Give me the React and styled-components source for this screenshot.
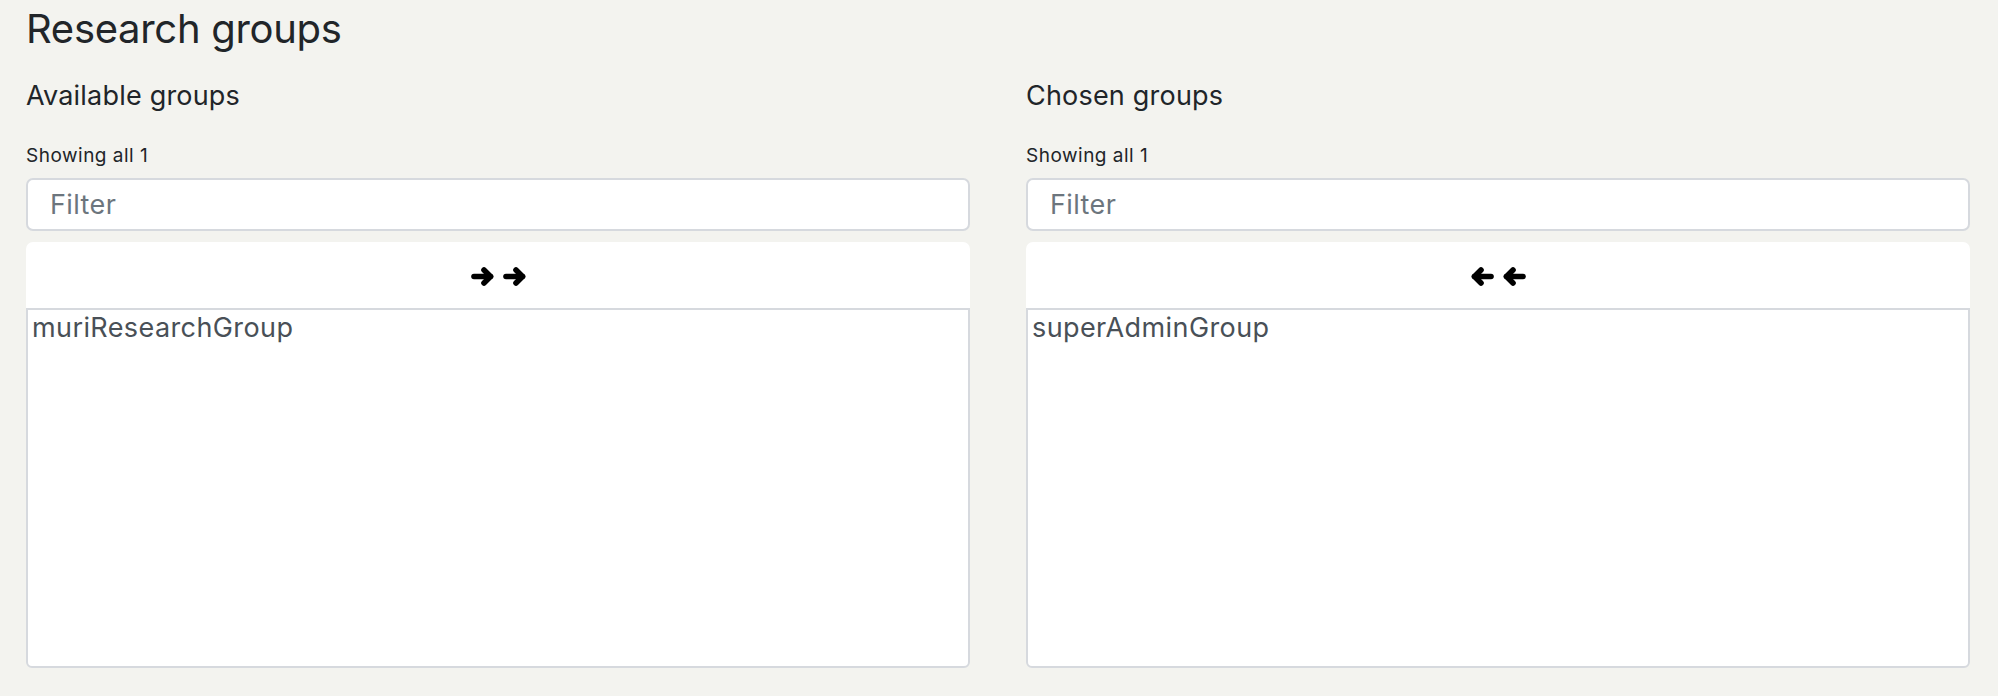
import React, { useState } from "react";
import styled, { createGlobalStyle } from "styled-components";

const GlobalStyle = createGlobalStyle`
  html, body {
    margin: 0;
    padding: 0;
    background-color: #f3f3ef;
    font-family: Inter, "Liberation Sans", Arial, sans-serif;
    color: #212529;
  }
`;

const Page = styled.div`
  padding: 5px 28px 0 26px;
`;

const Title = styled.h2`
  margin: 0;
  font-size: 40px;
  font-weight: 400;
  line-height: 48px;
  letter-spacing: -0.3px;
`;

const Columns = styled.div`
  display: grid;
  grid-template-columns: 1fr 1fr;
  column-gap: 56px;
  margin-top: 27px;
`;

const Panel = styled.section`
  display: flex;
  flex-direction: column;
`;

const GroupHeading = styled.h5`
  margin: 0;
  font-size: 27px;
  font-weight: 400;
  line-height: 32px;
  letter-spacing: 0.2px;
`;

const CountLabel = styled.div`
  margin-top: 32px;
  font-size: 19px;
  line-height: 23px;
  letter-spacing: 0.5px;
`;

const FilterInput = styled.input`
  box-sizing: border-box;
  margin-top: 11px;
  width: 100%;
  height: 53px;
  padding: 0 22px;
  border: 2px solid #d6d9de;
  border-radius: 7px;
  background: #fff;
  font-family: inherit;
  font-size: 27px;
  letter-spacing: 0.4px;
  color: #495057;
  outline: none;

  &::placeholder {
    color: #6c757d;
  }
`;

const MoveBar = styled.div`
  margin-top: 11px;
  height: 66px;
  display: flex;
  align-items: center;
  justify-content: center;
  background: #fff;
  border-radius: 7px 7px 0 0;
`;

const MoveButton = styled.button`
  display: flex;
  align-items: center;
  gap: 9px;
  padding: 0;
  margin-top: 2px;
  border: none;
  background: transparent;
  cursor: pointer;
  transform: ${(props) => (props.$dir === "left" ? "scaleX(-1)" : "none")};
`;

const ListBox = styled.div`
  box-sizing: border-box;
  height: 360px;
  padding-top: 2px;
  background: #fff;
  border: 2px solid #d6d9de;
  border-radius: 0 0 6px 6px;
  overflow-y: auto;
`;

const Option = styled.div`
  padding: 0 4px;
  font-size: 27px;
  line-height: 32px;
  letter-spacing: 0.4px;
  color: #495057;
  background: ${(props) => (props.$selected ? "#e2e6ea" : "transparent")};
  cursor: default;
`;

const Arrow = () => (
  <svg width="23" height="19" viewBox="0 0 23 19" aria-hidden="true">
    <g fill="none" stroke="#000" strokeWidth="5.6" strokeLinecap="round" strokeLinejoin="round">
      <path d="M3 9.5H19.5" />
      <path d="M13 3L19.5 9.5L13 16" />
    </g>
  </svg>
);

const GroupPanel = ({ heading, items, dir, selected, onSelect, onMove }) => {
  const [filter, setFilter] = useState("");
  const shown = items.filter((g) => g.toLowerCase().includes(filter.toLowerCase()));

  return (
    <Panel>
      <GroupHeading>{heading}</GroupHeading>
      <CountLabel>
        {shown.length === items.length ? `Showing all ${items.length}` : `Showing ${shown.length} of ${items.length}`}
      </CountLabel>
      <FilterInput
        placeholder="Filter"
        value={filter}
        onChange={(e) => setFilter(e.target.value)}
      />
      <MoveBar>
        <MoveButton $dir={dir} onClick={onMove} title="Move all">
          <Arrow />
          <Arrow />
        </MoveButton>
      </MoveBar>
      <ListBox>
        {shown.map((g) => (
          <Option key={g} $selected={selected === g} onClick={() => onSelect(g)}>
            {g}
          </Option>
        ))}
      </ListBox>
    </Panel>
  );
};

const App = () => {
  const [available, setAvailable] = useState(["muriResearchGroup"]);
  const [chosen, setChosen] = useState(["superAdminGroup"]);
  const [selected, setSelected] = useState(null);

  const moveAllRight = () => {
    setChosen([...chosen, ...available]);
    setAvailable([]);
  };

  const moveAllLeft = () => {
    setAvailable([...available, ...chosen]);
    setChosen([]);
  };

  return (
    <>
      <GlobalStyle />
      <Page>
        <Title>Research groups</Title>
        <Columns>
          <GroupPanel
            heading="Available groups"
            items={available}
            dir="right"
            selected={selected}
            onSelect={setSelected}
            onMove={moveAllRight}
          />
          <GroupPanel
            heading="Chosen groups"
            items={chosen}
            dir="left"
            selected={selected}
            onSelect={setSelected}
            onMove={moveAllLeft}
          />
        </Columns>
      </Page>
    </>
  );
};

export default App;
